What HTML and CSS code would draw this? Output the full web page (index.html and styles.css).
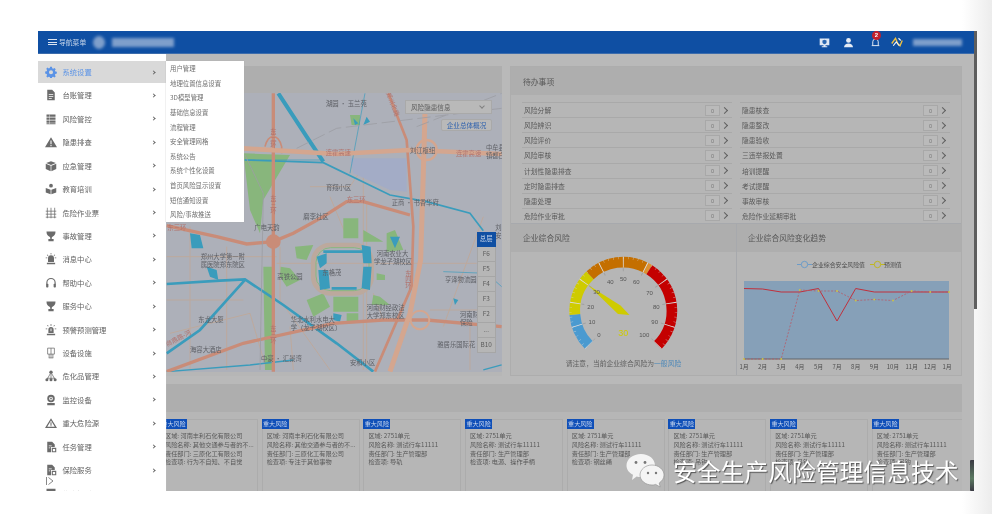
FILE: index.html
```html
<!DOCTYPE html>
<html lang="zh-CN">
<head>
<meta charset="utf-8">
<title>安全生产风险管理信息</title>
<link rel="stylesheet" href="styles.css">
</head>
<body>
<svg class="defs" width="0" height="0" aria-hidden="true">
  <symbol id="i-gear" viewBox="0 0 16 16"><path fill-rule="evenodd" d="M6.8 1h2.4l.4 2 1.3.6 1.8-1.1 1.6 1.7-1.1 1.7.6 1.4 2 .4v2.4l-2 .4-.6 1.4 1.1 1.7-1.6 1.6-1.8-1-1.3.5-.4 2H6.800l-.4-2-1.300-.5-1.800 1-1.600-1.600 1.100-1.700-.6-1.400-2-.4V7.300l2-.4.6-1.400-1.100-1.700 1.600-1.700 1.800 1.100 1.300-.6zM8 5.500a2.700 2.700 0 1 0 0 5.400 2.700 2.700 0 0 0 0-5.400z"/></symbol>
  <symbol id="i-doc" viewBox="0 0 16 16"><path fill-rule="evenodd" d="M3 1h6.500L13 4.500V15H3zM5 7v1h6V7zm0 2.500v1h6v-1zM5 12v1h4v-1z"/></symbol>
  <symbol id="i-table" viewBox="0 0 16 16"><path d="M2 2h12v3H2zM2 6h12v3H2zM2 10h12v3H2zM2 13.500h12V15H2z"/><path fill="#fff" d="M6 2h.5v13H6z"/></symbol>
  <symbol id="i-warn" viewBox="0 0 16 16"><path fill-rule="evenodd" d="M8 1.500 16 15H0zM7.300 6v5h1.400V6zm0 6v1.500h1.400V12z"/></symbol>
  <symbol id="i-box" viewBox="0 0 16 16"><path d="M8 1.500 14.500 4 8 6.800 1.500 4zM1 5l6.500 2.800V15L1 12zM15 5 8.500 7.800V15l6.500-3z"/></symbol>
  <symbol id="i-book" viewBox="0 0 16 16"><circle cx="8" cy="3.500" r="2.500"/><path d="M1 6.500 7.500 9v6L1 12.500zM15 6.500 8.500 9v6l6.500-2.500z"/></symbol>
  <symbol id="i-fence" viewBox="0 0 16 16"><path d="M2.500 1h1v14h-1zM7.500 1h1v14h-1zM12.500 1h1v14h-1zM1 5h14v1H1zM1 9h14v1H1zM1 13h14v1H1z"/></symbol>
  <symbol id="i-cup" viewBox="0 0 16 16"><path d="M2 2h12c0 4-1.500 5.500-3.500 6.500-.7.5-1.500 1-1.500 2V12h2.500v3h-7v-3H7v-1.500c0-1-.8-1.500-1.500-2C3.500 7.500 2 6 2 2z"/></symbol>
  <symbol id="i-bell" viewBox="0 0 16 16"><path d="M8 3a4 4 0 0 1 4 4v5H4V7a4 4 0 0 1 4-4zM2.500 13h11v2h-11zM1 6h2v1H1zM13 6h2v1h-2zM7.500 0h1v2h-1zM2.500 2.500l.8-.6 1.200 1.500-.7.600zM13.500 2.500l-.8-.6-1.200 1.500.7.600z"/></symbol>
  <symbol id="i-phones" viewBox="0 0 16 16"><path fill="none" stroke="currentColor" stroke-width="1.500" d="M2.500 10V7.500a5.500 5.500 0 0 1 11 0V10"/><rect x="1.500" y="9" width="3" height="5" rx="1"/><rect x="11.500" y="9" width="3" height="5" rx="1"/></symbol>
  <symbol id="i-alarm" viewBox="0 0 16 16"><path fill-rule="evenodd" d="M8 4a3.500 3.500 0 0 1 3.500 3.500V12h-7V7.500A3.500 3.500 0 0 1 8 4zM7.400 6v3.500h1.200V6zM2.500 13h11v2h-11z"/><path d="M7.500 0h1v2.500h-1zM1 6h2v1H1zM13 6h2v1h-2zM2.700 1.800l.8-.6 1.300 1.600-.8.600zM13.300 1.800l-.8-.6-1.300 1.600.8.600z"/></symbol>
  <symbol id="i-device" viewBox="0 0 16 16"><path fill="none" stroke="currentColor" d="M3.500 1.500h9v8h-9zM8 1.500v13M5 14.500h6M5.500 9.500v5M10.500 9.500v5"/></symbol>
  <symbol id="i-net" viewBox="0 0 16 16"><circle cx="8" cy="3" r="2.300"/><circle cx="2.500" cy="13" r="2"/><circle cx="8" cy="13" r="2"/><circle cx="13.500" cy="13" r="2"/><path fill="none" stroke="currentColor" d="M8 5v8M7 5 3 12M9 5l4 7M2.500 11h11"/></symbol>
  <symbol id="i-cam" viewBox="0 0 16 16"><path fill-rule="evenodd" d="M8 1a5 5 0 1 1 0 10A5 5 0 0 1 8 1zm0 2.500a2.500 2.500 0 1 0 0 5 2.500 2.500 0 0 0 0-5z"/><circle cx="8" cy="6" r="1.200"/><path d="M3 12h10v3H3z"/></symbol>
  <symbol id="i-hazard" viewBox="0 0 16 16"><path fill-rule="evenodd" d="M8 1.500 16 14.500H0zM8 4.500 3 13h10z"/><path d="M7.300 7h1.400v3.500H7.300zM7.300 11h1.400v1.300H7.300z"/></symbol>
  <symbol id="i-lock" viewBox="0 0 16 16"><path fill-rule="evenodd" d="M3 1h6.500L13 4.500V8H8v7H3zM5 6v1h4V6zm0 2.500v1h2v-1z"/><path fill-rule="evenodd" d="M9 9h6v6H9zm1.500 1.500v3h3v-3z"/></symbol>
  <symbol id="i-bars" viewBox="0 0 16 16"><path d="M2 1h12v3H2z"/></symbol>
</svg>

<div class="window">
  <div class="column">
    <header class="topbar">
      <div class="nav-toggle">
        <span class="burger"><i></i><i></i><i></i></span>
        <span class="nav-label">导航菜单</span>
      </div>
      <span class="smudge smudge-logo"></span>
      <span class="smudge smudge-title"></span>
      <div class="top-icons">
        <svg class="top-icon" viewBox="0 0 16 16"><path fill="#dfe8f4" d="M1 2h14v10H9.500v1.500H12V15H4v-1.500h2.500V12H1z"/><path fill="#2a66b0" d="M8 4l3 1v2.500c0 1.500-1.500 2.500-3 3-1.500-.5-3-1.500-3-3V5z"/></svg>
        <svg class="top-icon" viewBox="0 0 16 16"><circle fill="#e6ecf5" cx="8" cy="5" r="3.500"/><path fill="#e6ecf5" d="M1.500 15c0-3.500 3-5.500 6.500-5.500s6.500 2 6.500 5.500z"/></svg>
        <span class="bell-wrap">
          <svg class="top-icon" viewBox="0 0 16 16"><path fill="none" stroke="#e6ecf5" stroke-width="1.400" d="M4 12V7a4 4 0 0 1 8 0v5M2.500 12.500h11"/></svg>
          <b class="badge-red">2</b>
        </span>
        <svg class="top-icon top-icon-wide" viewBox="0 0 16 16"><path fill="none" stroke="#f0c040" stroke-width="1.800" d="M1 10 6 3l3 7 3 3 3-7"/><path fill="none" stroke="#f2f4f8" stroke-width="1.500" d="M3 13l4-5 4 5M10 3l3 3"/></svg>
        <span class="smudge smudge-user"></span>
      </div>
    </header>

    <div class="stage">
      <main class="content">
        <section class="panel map-panel">
          <div class="panel-head"></div>
          <div class="map-wrap">
            <svg class="map" viewBox="46 93 456 279" width="456" height="279">
              <rect x="46" y="93" width="456" height="279" fill="#adb0b9"/>
              <g transform="translate(150 60) scale(.3333)">
                <g fill="none" stroke="#bda99d" stroke-width="3">
                  <path d="M480 380H600L640 320V930"/><path d="M50 590H380M380 610H980M50 720H280"/>
                  <path d="M390 560V720L440 790 540 930M120 500V930M230 560V930M540 410 590 530M650 430V930M880 800 1000 470"/>
                  <path d="M840 750H1000M960 800V930M420 800 430 930"/>
                  <path d="M700 780 670 700M60 820 300 760 350 930"/>
                </g>
                <path d="M600 295H770V395L720 390 610 340z" fill="#a3acc6"/>
                <path d="M280 280 420 285 340 420 330 520 300 450zM340 620H368V930H345zM580 475H625V535H580zM640 510 700 545 640 545zM710 520 735 510 760 570 710 575zM435 560 490 555 470 600 440 595zM392 620 420 625 450 660 410 680 390 650zM470 720 520 700 540 740 490 770zM550 710H625V755H550zM590 760H625V785H590zM600 165H630V195H605zM670 705 690 710 720 735H665zM680 640 705 645V660H680z" fill="#88b67c"/>
                <g fill="none" stroke="#bca99d" stroke-width="14"><rect x="490" y="555" width="175" height="145" rx="50"/></g>
                <g fill="none" stroke="#8ab77c" stroke-width="3"><rect x="498" y="563" width="159" height="129" rx="44"/></g>
                <g fill="none" stroke="#3a9cbc">
                  <path stroke-width="12" d="M385 100 470 230 520 305"/>
                  <path stroke-width="5" d="M285 300 520 308 720 405 830 425 960 460 1000 512"/>
                  <path stroke-width="8" d="M50 672 210 662 285 658 400 735 560 850 670 935"/>
                  <path stroke-width="8" d="M50 880 150 810 285 660"/>
                  <path stroke-width="8" d="M520 575H660M545 685H620"/>
                  <path stroke-width="2" d="M645 100 600 340M280 300H520"/>
                  <path stroke-width="4" d="M50 935 300 915 430 900M1000 930 1055 915"/>
                  <path stroke-width="2" d="M880 635 1010 640 1055 680"/>
                </g>
                <path d="M500 590 530 580 530 610 510 625zM505 630H535L540 685 510 690zM635 555 662 560 665 610 640 610zM640 620 665 620 660 690 635 685zM120 520 150 525 160 565 125 565zM170 620 200 630 205 660 180 650zM610 175 625 190 615 195zM650 170 660 185 640 195zM910 715 925 720 915 735zM550 760 575 765 570 785 550 780zM720 530H750L735 565z" fill="#3a9cbc"/>
                <g fill="none" stroke="#c98c78">
                  <path stroke-width="10" d="M370 100V935"/>
                  <path stroke-width="8" d="M715 100 770 240 790 500 785 680 675 935"/>
                  <path stroke-width="10" d="M50 497 200 530 290 552 370 545 430 520 520 470 590 425 640 425 780 465"/>
                  <path stroke-width="10" d="M50 935 280 850 550 790 700 780 830 780 1055 800"/>
                  <path stroke-width="5" d="M345 260c10-40 40-40 50 0v20"/>
                </g>
                <g fill="none" stroke="#d4a68f">
                  <path stroke-width="14" d="M280 265 560 282 780 270 1055 282"/>
                  <path stroke-width="15" d="M825 160 820 340 812 600 780 760 720 935"/>
                  <circle stroke-width="7" cx="830" cy="270" r="30"/>
                  <circle stroke-width="6" cx="810" cy="780" r="28"/>
                </g>
                <circle cx="370" cy="545" r="22" fill="#c98c78"/>
                <g fill="none" stroke="#9c9ea4" stroke-width="2.500">
                  <path d="M285 285 340 400 330 930"/><path d="M440 265 560 205 1055 145" stroke-dasharray="40 14"/>
                  <path d="M800 200 1055 100" stroke-dasharray="40 14"/>
                </g>
                <g class="map-label">
                  <text x="528" y="139">湖园 · 玉兰苑</text>
                  <text x="780" y="280">刘江枢纽</text>
                  <text x="1008" y="271">中牟县</text>
                  <text x="1008" y="295">镇都白</text>
                  <text x="528" y="389">育翔小区</text>
                  <text x="725" y="436">正商 · 书香华府</text>
                  <text x="460" y="477">磨李社区</text>
                  <text x="313" y="510">广电天韵</text>
                  <text x="680" y="588">河南农业大</text>
                  <text x="672" y="612">学龙子湖校区</text>
                  <text x="517" y="646">东格茂</text>
                  <text x="382" y="658">高铁公园</text>
                  <text x="152" y="598">郑州大学第一附</text>
                  <text x="152" y="622">属医院郑东院区</text>
                  <text x="885" y="665">亨泽物流园</text>
                  <text x="650" y="749">河南财经政法</text>
                  <text x="650" y="773">大学郑东校区</text>
                  <text x="422" y="786">华北水利水电大</text>
                  <text x="422" y="811">学（龙子湖校区）</text>
                  <text x="145" y="785">东龙大厦</text>
                  <text x="120" y="877">海容大酒店</text>
                  <text x="862" y="861">雅居乐国际花</text>
                  <text x="930" y="772">河南财</text>
                  <text x="930" y="796">保险</text>
                  <text x="333" y="902">中豪 · 汇景湾</text>
                  <text x="600" y="916">安和小区</text>
                  <text x="1036" y="510">刘</text>
                  <text x="1036" y="534">安</text>
                </g>
                <g class="map-label road">
                  <text x="527" y="286">连霍高速</text>
                  <text x="918" y="288">连霍高速</text>
                  <text x="52" y="511">东三环</text>
                  <text x="590" y="427">东三环</text>
                  <text class="vert" x="370" y="205">东三环</text>
                  <text class="vert" x="370" y="405">东三环</text>
                  <text class="vert" x="370" y="795">东三环</text>
                  <text class="vert" x="775" y="630">东四环</text>
                  <text transform="translate(708 100) rotate(68)">郑州北路</text>
                  <text transform="translate(52 860) rotate(-28)">商鼎路-河</text>
                </g>
              </g>
            </svg>
            <div class="map-select"><span>风险隐患信息</span><i class="caret"></i></div>
            <button class="map-btn" type="button">企业总体概况</button>
            <ul class="floors">
              <li class="floor-on">总层</li><li>F6</li><li>F5</li><li>F4</li><li>F3</li><li>F2</li><li>...</li><li>B10</li>
            </ul>
          </div>
        </section>

        <section class="panel todo-panel">
          <div class="panel-head"><h2>待办事项</h2></div>
          <div class="todo-grid">
            <div class="todo"><span>风险分解</span><em>0</em><i class="arrow"></i></div>
            <div class="todo"><span>隐患核查</span><em>0</em><i class="arrow"></i></div>
            <div class="todo"><span>风险辨识</span><em>0</em><i class="arrow"></i></div>
            <div class="todo"><span>隐患整改</span><em>0</em><i class="arrow"></i></div>
            <div class="todo"><span>风险评价</span><em>0</em><i class="arrow"></i></div>
            <div class="todo"><span>隐患验收</span><em>0</em><i class="arrow"></i></div>
            <div class="todo"><span>风险审核</span><em>0</em><i class="arrow"></i></div>
            <div class="todo"><span>三违举报处置</span><em>0</em><i class="arrow"></i></div>
            <div class="todo"><span>计划性隐患排查</span><em>0</em><i class="arrow"></i></div>
            <div class="todo"><span>培训提醒</span><em>0</em><i class="arrow"></i></div>
            <div class="todo"><span>定时隐患排查</span><em>0</em><i class="arrow"></i></div>
            <div class="todo"><span>考试提醒</span><em>0</em><i class="arrow"></i></div>
            <div class="todo"><span>隐患处理</span><em>0</em><i class="arrow"></i></div>
            <div class="todo"><span>事故审核</span><em>0</em><i class="arrow"></i></div>
            <div class="todo"><span>危险作业审批</span><em>0</em><i class="arrow"></i></div>
            <div class="todo"><span>危险作业延期审批</span><em>0</em><i class="arrow"></i></div>
          </div>
          <div class="chart-row">
            <div class="chart-cell">
              <div class="chart-head"><h2>企业综合风险</h2></div>
              <svg class="gauge" viewBox="511 251 225 105" width="225" height="105">
                <g fill="none" stroke-width="10.700">
                  <path stroke="#4a9ad0" d="M588.900 344.100A48.600 48.600 0 0 1 574.850 313.500"/>
                  <path stroke="#cfcb00" d="M574.850 313.500A48.600 48.600 0 0 1 590 274.300"/>
                  <path stroke="#c46f00" d="M590 274.300A48.600 48.600 0 0 1 645.400 266.400"/>
                  <path stroke="#dd9130" d="M645.400 266.400A48.600 48.600 0 0 1 649.300 268.700"/>
                  <path stroke="#c40000" d="M649.300 268.700A48.600 48.600 0 0 1 657.700 344.100"/>
                  <path stroke="#dcdcdc" stroke-width="10.700" pathLength="100" stroke-dasharray=".35 9.650" stroke-dashoffset=".175" d="M588.900 344.100A48.600 48.600 0 1 1 657.700 344.100"/>
                </g>
                <path fill="none" stroke="#dcdcdc" stroke-opacity=".7" stroke-width="2.500" pathLength="100" stroke-dasharray=".18 1.820" stroke-dashoffset=".09" d="M586.200 346.800A52.700 52.700 0 1 1 660.400 346.800"/>
                <path fill="none" stroke="#a0a0a0" stroke-width="3" pathLength="100" stroke-dasharray=".5 9.500" stroke-dashoffset=".25" d="M594.300 338.700A41 41 0 1 1 652.300 338.700"/>
                <path fill="#cfcb00" d="M588 284 620.500 304.500 629.500 314 618 313z"/>
                <g class="gauge-num" text-anchor="middle">
                  <text x="599" y="336">0</text><text x="591.900" y="323">10</text><text x="590.700" y="307.500">20</text><text x="596.600" y="293.300">30</text><text x="610.300" y="283.300">40</text><text x="623.300" y="279.700">50</text><text x="636.300" y="283.300">60</text><text x="649.500" y="294.300">70</text><text x="656.300" y="307.500">80</text><text x="654.700" y="323">90</text><text x="644.300" y="336">100</text>
                </g>
                <text class="gauge-val" x="623.300" y="335" text-anchor="middle">30</text>
              </svg>
              <p class="gauge-note">请注意，当前企业综合风险为<a>一般风险</a></p>
            </div>
            <div class="chart-cell">
              <div class="chart-head chart-head-wide"><h2>企业综合风险变化趋势</h2></div>
              <svg class="trend" viewBox="737 251 225 124" width="225" height="124">
                <g class="legend" fill="none">
                  <path stroke="#6d9cc8" d="M797 263.500h15"/><circle cx="804.500" cy="263.500" r="3.200" stroke="#6d9cc8" fill="#b5b5b5"/>
                  <path stroke="#c0b820" d="M870 263.500h15"/><circle cx="877.500" cy="263.500" r="3.200" stroke="#c0b820" fill="#b5b5b5"/>
                </g>
                <text class="axis" x="812" y="266">企业综合安全风险值</text>
                <text class="axis" x="884" y="266">预测值</text>
                <rect x="744" y="280" width="205" height="78" fill="#86a0b8"/>
                <path d="M744 358H949" stroke="#555" stroke-width=".8"/>
                <path fill="none" stroke="#c0303c" stroke-width="1" d="M744 287.500 762.600 288 781.200 291 799.800 291 818.500 287.500 837 320 855.700 287.500 874.300 291 893 291 911.600 291 930.200 291 949 291"/>
                <path fill="none" stroke="#b65a68" stroke-width=".8" stroke-dasharray="2 1.500" d="M744 358H781.200L799.800 289 818.500 290 837 290 855.700 299.500 874.300 298.500 893 299.500 911.600 290 930.200 291 949 291"/>
                <g fill="#c9c54a"><circle cx="744" cy="358" r="1"/><circle cx="762.600" cy="358" r="1"/><circle cx="781.200" cy="358" r="1"/><circle cx="799.800" cy="289" r="1"/><circle cx="818.500" cy="290" r="1"/><circle cx="837" cy="290" r="1"/><circle cx="855.700" cy="299.500" r="1"/><circle cx="874.300" cy="298.500" r="1"/><circle cx="893" cy="299.500" r="1"/><circle cx="911.600" cy="290" r="1"/><circle cx="930.200" cy="291" r="1"/><circle cx="949" cy="291" r="1"/></g>
                <g class="axis" text-anchor="middle">
                  <text x="744" y="368">1月</text><text x="762.600" y="368">2月</text><text x="781.200" y="368">3月</text><text x="799.800" y="368">4月</text><text x="818.500" y="368">5月</text><text x="837" y="368">7月</text><text x="855.700" y="368">8月</text><text x="874.300" y="368">9月</text><text x="893" y="368">10月</text><text x="911.600" y="368">11月</text><text x="930.200" y="368">12月</text><text x="947" y="368">1月</text>
                </g>
              </svg>
            </div>
          </div>
        </section>

        <section class="panel risk-panel">
          <div class="panel-head"></div>
          <div class="risk-strip">
            <article class="risk-card"><b>重大风险</b><p>区域: 河南丰利石化有限公司</p><p>风险名称: 其他交通参与者的不...</p><p>责任部门: 三原化工有限公司</p><p>检查项: 行为不自知、不自觉</p></article>
            <article class="risk-card"><b>重大风险</b><p>区域: 河南丰利石化有限公司</p><p>风险名称: 其他交通参与者的不...</p><p>责任部门: 三原化工有限公司</p><p>检查项: 专注于其他事物</p></article>
            <article class="risk-card"><b>重大风险</b><p>区域: 2751单元</p><p>风险名称: 测试行车11111</p><p>责任部门: 生产管理部</p><p>检查项: 导轨</p></article>
            <article class="risk-card"><b>重大风险</b><p>区域: 2751单元</p><p>风险名称: 测试行车11111</p><p>责任部门: 生产管理部</p><p>检查项: 电源、操作手柄</p></article>
            <article class="risk-card"><b>重大风险</b><p>区域: 2751单元</p><p>风险名称: 测试行车11111</p><p>责任部门: 生产管理部</p><p>检查项: 钢丝绳</p></article>
            <article class="risk-card"><b>重大风险</b><p>区域: 2751单元</p><p>风险名称: 测试行车11111</p><p>责任部门: 生产管理部</p><p>检查项: 吊钩</p></article>
            <article class="risk-card"><b>重大风险</b><p>区域: 2751单元</p><p>风险名称: 测试行车11111</p><p>责任部门: 生产管理部</p><p>检查项: 吊钩</p></article>
            <article class="risk-card"><b>重大风险</b><p>区域: 2751单元</p><p>风险名称: 测试行车11111</p><p>责任部门: 生产管理部</p><p>检查项: 吊钩</p></article>
          </div>
        </section>
      </main>

      <nav class="sidebar">
        <a class="side-item side-on"><svg class="side-icon"><use href="#i-gear"/></svg><span>系统设置</span><i class="chev"></i></a>
        <a class="side-item"><svg class="side-icon"><use href="#i-doc"/></svg><span>台账管理</span><i class="chev"></i></a>
        <a class="side-item"><svg class="side-icon"><use href="#i-table"/></svg><span>风险管控</span><i class="chev"></i></a>
        <a class="side-item"><svg class="side-icon"><use href="#i-warn"/></svg><span>隐患排查</span><i class="chev"></i></a>
        <a class="side-item"><svg class="side-icon"><use href="#i-box"/></svg><span>应急管理</span><i class="chev"></i></a>
        <a class="side-item"><svg class="side-icon"><use href="#i-book"/></svg><span>教育培训</span><i class="chev"></i></a>
        <a class="side-item"><svg class="side-icon"><use href="#i-fence"/></svg><span>危险作业票</span><i class="chev"></i></a>
        <a class="side-item"><svg class="side-icon"><use href="#i-cup"/></svg><span>事故管理</span><i class="chev"></i></a>
        <a class="side-item"><svg class="side-icon"><use href="#i-bell"/></svg><span>消息中心</span><i class="chev"></i></a>
        <a class="side-item"><svg class="side-icon"><use href="#i-phones"/></svg><span>帮助中心</span><i class="chev"></i></a>
        <a class="side-item"><svg class="side-icon"><use href="#i-cup"/></svg><span>服务中心</span><i class="chev"></i></a>
        <a class="side-item"><svg class="side-icon"><use href="#i-alarm"/></svg><span>预警预测管理</span><i class="chev"></i></a>
        <a class="side-item"><svg class="side-icon"><use href="#i-device"/></svg><span>设备设施</span><i class="chev"></i></a>
        <a class="side-item"><svg class="side-icon"><use href="#i-net"/></svg><span>危化品管理</span><i class="chev"></i></a>
        <a class="side-item"><svg class="side-icon"><use href="#i-cam"/></svg><span>监控设备</span><i class="chev"></i></a>
        <a class="side-item"><svg class="side-icon"><use href="#i-hazard"/></svg><span>重大危险源</span><i class="chev"></i></a>
        <a class="side-item"><svg class="side-icon"><use href="#i-lock"/></svg><span>任务管理</span><i class="chev"></i></a>
        <a class="side-item"><svg class="side-icon"><use href="#i-lock"/></svg><span>保险服务</span><i class="chev"></i></a>
        <a class="side-item"><svg class="side-icon"><use href="#i-bars"/></svg><span>信息报送</span><i class="chev"></i></a>
      </nav>
      <div class="side-expand">
        <svg viewBox="0 0 8 8" width="8" height="8"><path fill="none" stroke="#555" stroke-width=".7" d="M.5 0v8M2.500 .5 7 4 2.500 7.500"/></svg>
      </div>

      <ul class="submenu">
        <li>用户管理</li><li>地理位置信息设置</li><li>3D模型管理</li><li>基础信息设置</li><li>流程管理</li><li>安全管理网格</li><li>系统公告</li><li>系统个性化设置</li><li>首页风险显示设置</li><li>短信通知设置</li><li>风险/事故推送</li>
      </ul>

      <div class="watermark">
        <svg viewBox="0 0 42 36" width="42" height="36">
          <path fill="#f4f4f4" d="M16 2c8 0 14 5 14 11.500S24 25 16 25c-1.500 0-3-.2-4.400-.6L7 28l1-5.200C4 20.800 1.500 17.500 1.500 13.500 1.500 7 8 2 16 2z"/>
          <path fill="#f4f4f4" stroke="#8d8d8d" stroke-width=".6" d="M27 13c6.500 0 12 4.500 12 10 0 3.200-1.800 6-4.800 8l1 4-4.500-2.600c-1.200.4-2.400.6-3.700.6-6.500 0-12-4.500-12-10s5.500-10 12-10z"/>
          <circle cx="11" cy="10.500" r="1.400" fill="#777"/><circle cx="20" cy="10.500" r="1.400" fill="#777"/>
          <circle cx="23" cy="21" r="1.200" fill="#777"/><circle cx="31" cy="21" r="1.200" fill="#777"/>
        </svg>
        <span>安全生产风险管理信息技术</span>
      </div>
      <div class="dock"></div>
    </div>
  </div>
  <div class="scrollbar"><span></span></div>
</div>
</body>
</html>
```

FILE: styles.css
```css
* { box-sizing: border-box; }
html, body { margin: 0; height: 100%; }
body {
  overflow: hidden;
  padding: 31px 0 0 38px;
  font-family: "Noto Sans CJK SC", "Liberation Sans", sans-serif;
  background: linear-gradient(90deg, #fff 0, #fff 97%, #ececec 100%);
}
.defs { position: absolute; }
h2, p, ul { margin: 0; padding: 0; font-weight: 400; }
ul { list-style: none; }

.window { display: flex; width: 939px; height: 460px; filter: blur(.5px); }
.column { display: flex; flex-direction: column; width: 936px; }
.scrollbar { width: 3px; display: flex; flex-direction: column; }
.scrollbar span { height: 278px; background: #5e5e5e; }

.topbar {
  flex: none; height: 23px; display: flex; align-items: center;
  padding: 0 12px 0 10px;
  background: #0f4fa3; border-bottom: 1px solid #3c6cac; color: #c8d6ea;
}
.nav-toggle { display: flex; align-items: center; gap: 2px; }
.burger { display: flex; flex-direction: column; gap: 1.500px; width: 9px; }
.burger i { display: block; height: 1px; background: #dbe4f2; }
.nav-label { font-size: 6.800px; }
.smudge { display: block; filter: blur(1.800px); background: #7f9fcb; }
.smudge-logo { width: 12px; height: 13px; margin-left: 7px; border-radius: 50%; }
.smudge-title { width: 62px; height: 9px; margin-left: 7px; }
.smudge-user { width: 49px; height: 7px; margin-left: -3px; }
.top-icons { display: flex; align-items: center; margin-left: auto; gap: 13px; }
.top-icon { display: block; width: 11px; height: 11px; }
.top-icon-wide { width: 12px; height: 12px; }
.bell-wrap { position: relative; display: block; margin: 0 -3px 0 3px; }
.badge-red {
  position: absolute; left: 2px; top: -6px;
  width: 9px; height: 9px; border-radius: 50%;
  background: #c3202c; color: #fff;
  font: 700 6px/9px "Liberation Sans", sans-serif; text-align: center;
}

.stage { position: relative; flex: 1; min-height: 0; overflow: hidden; }
.content {
  height: 100%; overflow: hidden;
  display: grid; grid-template-columns: 456px 452px; grid-template-rows: 310px 1fr;
  gap: 8px; padding: 12px 0 0 8px;
  background: #b9b9b9; color: #5a5a5a;
}
.panel { display: flex; flex-direction: column; min-height: 0; background: #b6b6b6; border: 1px solid #adadad; }
.panel-head { flex: none; height: 28px; display: flex; align-items: center; padding-left: 12px; background: #aeaeae; }
.panel-head h2, .chart-head h2 { font-size: 7.800px; color: #585858; }

.map-panel { border-width: 0; }
.map-wrap { position: relative; flex: 1; margin-top: -1px; }
.map { display: block; }
.map-label text { font-size: 19px; fill: #5e6066; }
.map-label.road text { fill: #b0736e; }
.map-label .vert { writing-mode: vertical-rl; }
.map-select {
  position: absolute; left: 359px; top: 7px; width: 87px; height: 14px;
  display: flex; align-items: center; justify-content: space-between; padding: 0 5px;
  background: #b9b9b9; border: 1px solid #a9a9a9; font-size: 6.600px; color: #5f5f5f;
}
.caret { width: 4px; height: 4px; margin: -2px 2px 0 0; border: solid #808080; border-width: 0 1px 1px 0; transform: rotate(45deg); }
.map-btn {
  position: absolute; left: 395px; top: 26px; width: 51px; height: 12px; padding: 0;
  background: #b9b9b9; border: 1px solid #a9a9a9; border-radius: 2px;
  font: 6.600px "Noto Sans CJK SC", sans-serif; color: #2f62ae;
}
.floors { position: absolute; left: 431px; top: 139px; width: 18.500px; }
.floors li {
  height: 15.100px; font-size: 6.400px; line-height: 14px; text-align: center;
  background: #b6b6b6; border: 1px solid #a6a6a6; border-top-width: 0; color: #5b5b5b;
}
.floors .floor-on { background: #0f4fa3; border-color: #0f4fa3; color: #c9d7ea; }

.todo-grid { display: grid; grid-template-columns: 210px 210px; gap: 0 8px; padding: 7px 0 0 11px; flex: none; height: 128px; }
.todo { height: 15.130px; display: flex; align-items: center; padding: 0 1px 0 2px; border-top: 1px solid #a9a9a9; font-size: 6.800px; color: #5a5a5a; }
.todo span { flex: 1; }
.todo em { width: 15px; height: 11px; font: 5.500px/10px "Liberation Sans", sans-serif; text-align: center; border: 1px solid #a8a8a8; background: #bababa; color: #777; }
.arrow { width: 5px; height: 5px; margin: 0 4px 0 2px; border: solid #5f5f5f; border-width: 1px 1px 0 0; transform: rotate(45deg); }

.chart-row { flex: 1; display: flex; min-height: 0; border-top: 1px solid #a7a9ad; }
.chart-cell { flex: 1 1 50%; display: flex; flex-direction: column; align-items: center; min-width: 0; }
.chart-cell + .chart-cell { border-left: 1px solid #a7a9ad; }
.chart-head { align-self: stretch; flex: none; height: 27.500px; display: flex; align-items: center; padding-left: 12px; background: #aeaeae; }
.chart-head-wide { padding-left: 11px; }
.gauge, .trend { display: block; flex: none; }
.gauge-num text { font: 6px "Liberation Sans", sans-serif; fill: #555; }
.gauge-val { font: 9px "Liberation Sans", sans-serif; fill: #cfcb00; }
.gauge-note { margin-top: 1px; font-size: 6.800px; color: #5e5e5e; white-space: nowrap; }
.gauge-note a { color: #4a87b8; }
.axis, .axis text { font-size: 5.900px; fill: #4e4e4e; }

.risk-panel { grid-column: 1 / -1; border-width: 0; overflow: hidden; }
.risk-strip { display: flex; gap: 3.700px; padding: 7px 0 0 114px; overflow: hidden; flex: 1; }
.risk-card { flex: none; width: 98px; border: 1px solid #acacac; border-bottom: 0; font-size: 6.200px; line-height: 8.800px; color: #585858; }
.risk-card b {
  display: block; width: 27px; height: 9.500px; margin: -1px 0 3.500px -1px;
  background: #0f4fb8; color: #c9d7ee; font-weight: 400; font-size: 6.100px; line-height: 9.500px; text-align: center;
}
.risk-card p { padding-left: 4px; white-space: nowrap; overflow: hidden; }

.sidebar {
  position: absolute; left: 0; top: 0; bottom: 0; width: 128px; overflow: hidden;
  padding-top: 7px; background: #fff; box-shadow: 0 0 1px #c8c8c8;
}
.side-item {
  display: flex; align-items: center; height: 22px; margin-bottom: 1.430px;
  padding-left: 7px; font-size: 7.300px; color: #636363;
}
.side-icon { flex: none; width: 12px; height: 12px; margin-right: 5.500px; fill: #6b6b6b; color: #6b6b6b; }
.side-item span { flex: 1; }
.chev { width: 3px; height: 3px; margin-right: 11px; border: solid #666; border-width: 1px 1px 0 0; transform: rotate(45deg); }
.side-on { background: #d9d9d9; color: #5b93e6; }
.side-on .side-icon { fill: #5b93e6; color: #5b93e6; }
.side-expand { position: absolute; left: 8px; top: 423px; line-height: 0; }

.submenu {
  position: absolute; left: 127.500px; top: 7px; width: 78px; height: 161px;
  padding: 1px 0 0 4.500px; background: #fff; box-shadow: 0 0 1px #aaa;
  font-size: 6.400px; line-height: 14.640px; color: #707070;
}
.submenu li { height: 14.640px; white-space: nowrap; }

.watermark { position: absolute; left: 587px; top: 398px; display: flex; align-items: center; gap: 6px; color: #fff; }
.watermark span { font-size: 23.800px; line-height: 30px; margin-top: 2px; text-shadow: 1px 1px 1px #555; white-space: nowrap; }
.dock {
  position: absolute; right: 0; top: 406px; width: 4px; height: 31px;
  border-radius: 1px 0 0 1px; background: linear-gradient(#3a3a44, #5c7a62 60%, #3a3a44);
}
```
